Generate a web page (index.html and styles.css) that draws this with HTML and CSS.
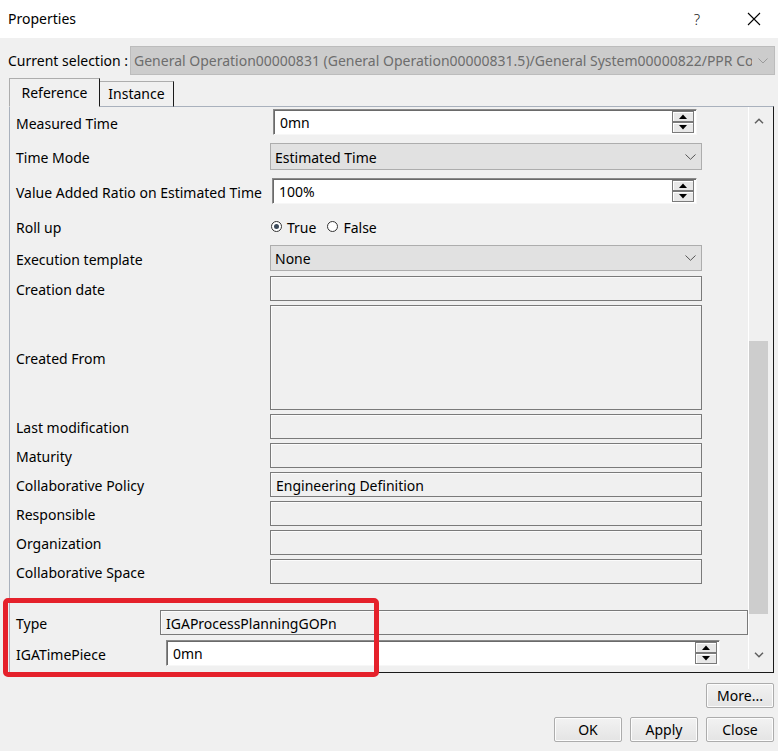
FILE: index.html
```html
<!DOCTYPE html>
<html>
<head>
<meta charset="utf-8">
<link rel="stylesheet" href="styles.css">
</head>
<body>
<div class="window">
  <div class="titlebar">
    <span class="title">Properties</span>
    <span class="help">?</span>
    <svg class="close" width="14" height="14" viewBox="0 0 14 14"><path d="M1 1 L13 13 M13 1 L1 13" stroke="#000" stroke-width="1.1" fill="none"/></svg>
  </div>
  <div class="main">
    <div class="selection-row">
      <span class="sel-label">Current selection :</span>
      <div class="combo disabled">
        <span class="combo-text">General Operation00000831 (General Operation00000831.5)/General System00000822/PPR Context00000003</span>
        <span class="combo-arrow"><svg width="10" height="6" viewBox="0 0 10 6"><path d="M0.5 0.5 L5 5 L9.5 0.5" stroke="#9a9a9a" fill="none"/></svg></span>
      </div>
    </div>
    <div class="tabs">
      <div class="tab active">Reference</div>
      <div class="tab">Instance</div>
    </div>
    <div class="panel">
      <div class="content">
        <div class="row r1">
          <span class="label">Measured Time</span>
          <div class="spin w-measured">
            <span class="val">0mn</span>
            <div class="spinbtns">
              <div class="sb"><svg width="8" height="5" viewBox="0 0 8 5"><path d="M0 5 L4 0.5 L8 5 Z" fill="#000"/></svg></div>
              <div class="sb"><svg width="8" height="5" viewBox="0 0 8 5"><path d="M0 0 L4 4.5 L8 0 Z" fill="#000"/></svg></div>
            </div>
          </div>
        </div>
        <div class="row r2">
          <span class="label">Time Mode</span>
          <div class="dropdown">
            <span class="val">Estimated Time</span>
            <svg width="11" height="6" viewBox="0 0 11 6"><path d="M0.5 0.5 L5.5 5.3 L10.5 0.5" stroke="#555" fill="none"/></svg>
          </div>
        </div>
        <div class="row r3">
          <span class="label">Value Added Ratio on Estimated Time</span>
          <div class="spin w-value">
            <span class="val">100%</span>
            <div class="spinbtns">
              <div class="sb"><svg width="8" height="5" viewBox="0 0 8 5"><path d="M0 5 L4 0.5 L8 5 Z" fill="#000"/></svg></div>
              <div class="sb"><svg width="8" height="5" viewBox="0 0 8 5"><path d="M0 0 L4 4.5 L8 0 Z" fill="#000"/></svg></div>
            </div>
          </div>
        </div>
        <div class="row r4">
          <span class="label">Roll up</span>
          <div class="radios">
            <span class="radio checked"></span><span class="rtext">True</span>
            <span class="radio"></span><span class="rtext">False</span>
          </div>
        </div>
        <div class="row r5">
          <span class="label">Execution template</span>
          <div class="dropdown">
            <span class="val">None</span>
            <svg width="11" height="6" viewBox="0 0 11 6"><path d="M0.5 0.5 L5.5 5.3 L10.5 0.5" stroke="#555" fill="none"/></svg>
          </div>
        </div>
        <div class="row r6">
          <span class="label">Creation date</span>
          <div class="box"></div>
        </div>
        <div class="row r7">
          <span class="label">Created From</span>
          <div class="box tall"></div>
        </div>
        <div class="row rn">
          <span class="label">Last modification</span>
          <div class="box"></div>
        </div>
        <div class="row rn">
          <span class="label">Maturity</span>
          <div class="box"></div>
        </div>
        <div class="row rn">
          <span class="label">Collaborative Policy</span>
          <div class="box"><span class="val">Engineering Definition</span></div>
        </div>
        <div class="row rn">
          <span class="label">Responsible</span>
          <div class="box"></div>
        </div>
        <div class="row rn">
          <span class="label">Organization</span>
          <div class="box"></div>
        </div>
        <div class="row rn">
          <span class="label">Collaborative Space</span>
          <div class="box"></div>
        </div>
        <div class="row r-type">
          <span class="label lbl-type">Type</span>
          <div class="box wide"><span class="val">IGAProcessPlanningGOPn</span></div>
        </div>
        <div class="row r-iga">
          <span class="label lbl-iga">IGATimePiece</span>
          <div class="spin w-iga">
            <span class="val">0mn</span>
            <div class="spinbtns">
              <div class="sb"><svg width="8" height="5" viewBox="0 0 8 5"><path d="M0 5 L4 0.5 L8 5 Z" fill="#000"/></svg></div>
              <div class="sb"><svg width="8" height="5" viewBox="0 0 8 5"><path d="M0 0 L4 4.5 L8 0 Z" fill="#000"/></svg></div>
            </div>
          </div>
        </div>
      </div>
      <div class="scrollbar">
        <div class="sarrow"><svg width="10" height="6" viewBox="0 0 10 6"><path d="M1 5.2 L5 1.2 L9 5.2" stroke="#606060" stroke-width="1.5" fill="none"/></svg></div>
        <div class="track"><div class="thumb"></div></div>
        <div class="sarrow"><svg width="10" height="6" viewBox="0 0 10 6"><path d="M1 0.8 L5 4.8 L9 0.8" stroke="#606060" stroke-width="1.5" fill="none"/></svg></div>
      </div>
    </div>
    <div class="more-row"><div class="btn">More...</div></div>
    <div class="button-row">
      <div class="btn">OK</div>
      <div class="btn">Apply</div>
      <div class="btn">Close</div>
    </div>
  </div>
  <div class="annotation"></div>
</div>
</body>
</html>
```
FILE: styles.css
```css
* { box-sizing: border-box; }
html, body { margin: 0; padding: 0; }
body {
  font-family: "Noto Sans", "Open Sans", sans-serif;
  font-size: 14px;
  color: #000;
  background: #f0f0f0;
}
.window {
  position: relative;
  width: 778px;
  height: 751px;
  overflow: hidden;
  background: #f0f0f0;
}
.titlebar {
  height: 38px;
  background: #fff;
  display: flex;
  align-items: center;
  padding-left: 8px;
  padding-right: 17px;
  padding-bottom: 1px;
}
.title { flex: 1; }
.help {
  font-weight: 300;
  color: #222;
  margin-right: 47px;
  font-size: 15px;
}
.close { display: block; }
.main {
  padding: 8px 3px 0 8px;
}
.selection-row {
  display: flex;
  align-items: center;
  height: 29px;
}
.sel-label { width: 122px; white-space: nowrap; }
.combo {
  flex: 1;
  height: 29px;
  display: flex;
  align-items: center;
  border: 1px solid #bcbcbc;
  background: #cccccc;
  color: #6d6d6d;
  overflow: hidden;
}
.combo-text {
  flex: 1;
  padding-left: 3px;
  white-space: nowrap;
  overflow: hidden;
}
.combo-arrow {
  width: 22px;
  display: flex;
  justify-content: center;
  align-items: center;
}
.tabs {
  display: flex;
  align-items: flex-end;
  height: 29px;
  margin-top: 3px;
  margin-left: 1px;
  margin-bottom: -1px;
  position: relative;
  z-index: 1;
}
.tab {
  height: 26px;
  width: 74px;
  display: flex;
  align-items: center;
  justify-content: center;
  border-top: 1px solid #adadad;
  border-right: 1px solid #1a1a1a;
  background: #f0f0f0;
  border-bottom: 1px solid #a9b1bd;
  padding-bottom: 1px;
}
.tab.active {
  height: 29px;
  width: 91px;
  border-left: 1px solid #adadad;
  border-bottom: 1px solid #f0f0f0;
  padding-bottom: 0;
}
.panel {
  margin-left: 1px;
  margin-right: 1px;
  height: 567px;
  display: flex;
  border-top: 1px solid #a9b1bd;
  border-left: 1px solid #a9b1bd;
  border-right: 1px solid #1a1a1a;
  border-bottom: 1px solid #1a1a1a;
  padding-right: 4px;
}
.content {
  flex: 1;
  display: flex;
  flex-direction: column;
  padding-left: 6px;
}
.row {
  display: flex;
  align-items: center;
}
.label {
  width: 254px;
  flex: none;
  white-space: nowrap;
  padding-top: 2px;
}
.lbl-type { width: 144px; }
.lbl-iga { width: 149px; }
.r1 { margin-top: 2px; height: 26px; }
.r2 { margin-top: 8px; height: 27px; }
.r3 { margin-top: 8px; height: 26px; }
.r4 { margin-top: 10px; height: 24px; }
.r5 { margin-top: 7px; height: 26px; }
.r6 { margin-top: 5px; height: 25px; }
.r7 { margin-top: 4px; height: 105px; }
.rn { margin-top: 4px; height: 25px; }
.r-type { margin-top: 26px; height: 25px; }
.r-iga { margin-top: 5px; height: 26px; }
.val { padding-left: 5px; white-space: nowrap; padding-top: 1px; }
.spin {
  height: 100%;
  display: flex;
  align-items: stretch;
  background: #fff;
  border: 1px solid;
  border-color: #8a8a8a #f7f7f7 #f7f7f7 #8a8a8a;
  box-shadow: inset 1px 1px 0 #6a6a6a;
  padding: 1px 2px 1px 0;
}
.spin .val {
  flex: 1;
  display: flex;
  align-items: center;
  padding-left: 6px;
}
.w-measured { width: 424px; margin-left: 3px; }
.w-value { width: 425px; margin-left: 2px; }
.w-iga { width: 554px; margin-left: 1px; }
.spinbtns {
  width: 22px;
  display: flex;
  flex-direction: column;
}
.sb {
  flex: 1;
  display: flex;
  align-items: center;
  justify-content: center;
  border: 1px solid #7a7a7a;
  background: #e8e8e8;
  box-shadow: inset 1px 1px 0 #fff;
}
.sb svg { display: block; }
.dropdown {
  width: 432px;
  height: 100%;
  display: flex;
  align-items: center;
  justify-content: space-between;
  background: #e1e1e1;
  border: 1px solid #adadad;
  padding-right: 5px;
}
.dropdown .val { padding-left: 4px; }
.radios {
  display: flex;
  align-items: center;
  padding-left: 1px;
  padding-top: 1px;
}
.radio {
  width: 11px;
  height: 11px;
  border: 1px solid #333;
  border-radius: 50%;
  background: #fff;
  display: flex;
  align-items: center;
  justify-content: center;
}
.radio.checked::after {
  content: "";
  width: 5px;
  height: 5px;
  border-radius: 50%;
  background: #3c4a5a;
}
.rtext { margin-left: 5px; margin-right: 11px; padding-top: 1px; }
.box {
  width: 432px;
  height: 100%;
  border: 1px solid #7a7a7a;
  background: #f0f0f0;
  box-shadow: inset 1px 1px 0 #fbfbfb;
  display: flex;
  align-items: center;
}
.box .val { padding-left: 5px; }
.box.wide { flex: 1; width: auto; }
.scrollbar {
  width: 21px;
  border-left: 1px solid #fff;
  display: flex;
  flex-direction: column;
  margin-bottom: 3px;
}
.sarrow {
  height: 28px;
  display: flex;
  align-items: center;
  justify-content: center;
}
.sarrow svg { display: block; }
.track { flex: 1; }
.thumb {
  margin-top: 206px;
  height: 273px;
  width: 19px;
  background: #cdcdcd;
}
.more-row {
  display: flex;
  justify-content: flex-end;
  margin-top: 10px;
  padding-right: 1px;
}
.button-row {
  display: flex;
  justify-content: flex-end;
  gap: 8px;
  margin-top: 9px;
  padding-right: 1px;
}
.btn {
  width: 68px;
  height: 25px;
  display: flex;
  align-items: center;
  justify-content: center;
  border: 1px solid #acacac;
  border-radius: 2px;
  background: linear-gradient(#f2f2f2, #e4e4e4);
  box-shadow: inset 0 0 0 1px #fcfcfc;
}
.annotation {
  position: absolute;
  left: 3px;
  top: 598px;
  width: 376px;
  height: 79px;
  border: 5px solid #e5212b;
  border-radius: 5px;
  pointer-events: none;
}
```
